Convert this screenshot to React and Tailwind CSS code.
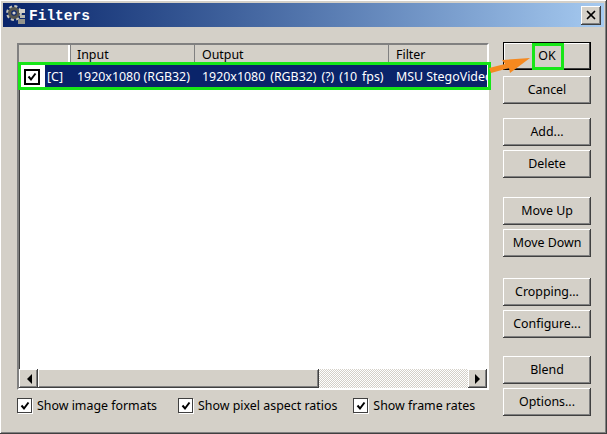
import { X } from "lucide-react";

const raised =
  "shadow-[inset_-1px_-1px_#404040,inset_1px_1px_#ffffff,inset_-2px_-2px_#808080,inset_2px_2px_#d4d0c8]";

function Button({ label, className = "" }) {
  return (
    <button
      className={`w-[88px] h-[28px] bg-[#d4d0c8] text-[12.4px] text-black flex items-center justify-center ${raised} ${className}`}
    >
      {label}
    </button>
  );
}

function CheckMark({ className = "" }) {
  return (
    <svg viewBox="0 0 10 10" className={className}>
      <path d="M1.5 4.5 L4 7.5 L8.5 1.5" fill="none" stroke="black" strokeWidth="2" />
    </svg>
  );
}

function Option({ label, className = "" }) {
  return (
    <label className={`flex items-center gap-[5px] ${className}`}>
      <span className="w-[15px] h-[15px] bg-white border border-[#404040] shadow-[1px_1px_#ffffff] flex items-center justify-center">
        <CheckMark className="w-[10px] h-[10px]" />
      </span>
      <span className="text-[12.4px] leading-[15px] text-black whitespace-nowrap">{label}</span>
    </label>
  );
}

function Arrow({ dir }) {
  return (
    <div className={`w-[19px] h-[19px] bg-[#d4d0c8] flex items-center justify-center shrink-0 ${raised}`}>
      <svg viewBox="0 0 6 10" className="w-[6px] h-[10px]">
        <path d={dir === "left" ? "M6 0 L1 5 L6 10 Z" : "M0 0 L5 5 L0 10 Z"} fill="black" />
      </svg>
    </div>
  );
}

function FilterList() {
  return (
    <div className="w-[472px] h-[347px] bg-white flex flex-col border-2 border-[#808080] border-r-white border-b-white shadow-[inset_1px_1px_#404040] overflow-hidden">
      <div className="h-[19px] shrink-0 flex text-[12.4px] text-black bg-[#d4d0c8]">
        <div className="w-[52px] border-r border-[#808080] shadow-[inset_-2px_0_#ffffff]" />
        <div className="w-[124px] pl-[6px] border-r border-[#808080] leading-[20px]">Input</div>
        <div className="w-[194px] pl-[7px] border-r border-[#808080] leading-[20px]">Output</div>
        <div className="flex-1 pl-[7px] leading-[20px]">Filter</div>
      </div>
      <div className="h-[25px] shrink-0 flex items-center text-[12.4px] leading-[26px] text-white bg-[#0a246a] whitespace-nowrap overflow-hidden">
        <div className="w-[26px] h-full bg-white flex items-center justify-center shrink-0">
          <div className="w-[16px] h-[16px] border-2 border-black flex items-center justify-center">
            <CheckMark className="w-[10px] h-[10px]" />
          </div>
        </div>
        <div className="w-[32px] pl-[2px] shrink-0">[C]</div>
        <div className="w-[125px] shrink-0">1920x1080 (RGB32)</div>
        <div className="w-[194px] shrink-0 [word-spacing:1.7px]">1920x1080 (RGB32) (?) (10 fps)</div>
        <div className="w-[93px] shrink-0 overflow-hidden">MSU StegoVideo</div>
      </div>
      <div className="flex-1" />
      <div className="h-[19px] shrink-0 flex bg-[repeating-conic-gradient(#d4d0c8_0_25%,#ffffff_0_50%)] bg-[length:2px_2px]">
        <Arrow dir="left" />
        <div className={`w-[281px] bg-[#d4d0c8] ${raised}`} />
        <div className="flex-1" />
        <Arrow dir="right" />
      </div>
    </div>
  );
}

export default function App() {
  return (
    <div className="relative w-[607px] h-[434px] bg-[#d4d0c8] p-[3px] flex flex-col font-['Noto_Sans',sans-serif] shadow-[inset_-1px_-1px_#404040,inset_1px_1px_#ffffff,inset_-2px_-2px_#808080] overflow-hidden">
      <div className="h-[24px] shrink-0 flex items-center pl-[2px] pr-[3px] bg-gradient-to-r from-[#0a246a] to-[#a6caf0]">
        <svg viewBox="0 0 22 22" className="w-[22px] h-[22px] shrink-0">
          <circle cx="9" cy="9" r="6.6" fill="none" stroke="#c4c4bc" strokeWidth="2.6" strokeDasharray="3 2.2" />
          <circle cx="9" cy="9" r="4.4" fill="none" stroke="#55554f" strokeWidth="3.2" />
          <circle cx="9" cy="9" r="1.6" fill="#d4d0c8" />
          <rect x="14" y="5" width="6" height="4" fill="#d4d0c8" />
          <rect x="15" y="11" width="5" height="3" fill="#b8b8b0" />
          <rect x="13" y="15" width="7" height="5" fill="#94948c" />
        </svg>
        <span className="ml-[2px] pt-[3px] text-[14.5px] font-bold text-white font-['Liberation_Mono',monospace]">
          Filters
        </span>
        <button className={`ml-auto w-[20px] h-[19px] bg-[#d4d0c8] flex items-center justify-center ${raised}`}>
          <X size={14} strokeWidth={3} color="black" />
        </button>
      </div>

      <div className="flex flex-1 pl-[14px] pr-[13px] pt-[16px] gap-[14px]">
        <div className="flex flex-col w-[472px]">
          <FilterList />
          <div className="flex mt-[8px]">
            <Option label="Show image formats" />
            <Option label="Show pixel aspect ratios" className="ml-[21px]" />
            <Option label="Show frame rates" className="ml-[16px]" />
          </div>
        </div>

        <div className="flex flex-col -mt-[1px]">
          <Button label="OK" className="shadow-[inset_0_0_0_1px_#000000,inset_-2px_-2px_#404040,inset_2px_2px_#ffffff]" />
          <Button label="Cancel" className="mt-[6px]" />
          <Button label="Add..." className="mt-[14px]" />
          <Button label="Delete" className="mt-[4px]" />
          <Button label="Move Up" className="mt-[19px]" />
          <Button label="Move Down" className="mt-[4px]" />
          <Button label="Cropping..." className="mt-[21px]" />
          <Button label="Configure..." className="mt-[4px]" />
          <Button label="Blend" className="mt-[18px]" />
          <Button label="Options..." className="mt-[4px]" />
        </div>
      </div>

      {/* annotation overlay */}
      <div className="absolute left-[18px] top-[62px] w-[473px] h-[28px] border-[3px] border-[#17e617] pointer-events-none" />
      <div className="absolute left-[532px] top-[43px] w-[32px] h-[27px] border-[3px] border-[#17e617] pointer-events-none" />
      <svg viewBox="0 0 44 20" className="absolute left-[488px] top-[54px] w-[44px] h-[20px] pointer-events-none">
        <path d="M42 4 L14 6 L17 10 L1 14 L3 19 L21 14 L22 19 Z" fill="#f5891f" />
      </svg>
    </div>
  );
}
